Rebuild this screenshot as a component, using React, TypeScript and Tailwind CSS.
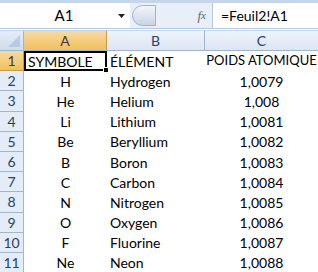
import React from 'react';

const rows: [string, string, string][] = [
    ['SYMBOLE', 'ÉLÉMENT', 'POIDS ATOMIQUE'],
    ['H', 'Hydrogen', '1,0079'],
    ['He', 'Helium', '1,008'],
    ['Li', 'Lithium', '1,0081'],
    ['Be', 'Beryllium', '1,0082'],
    ['B', 'Boron', '1,0083'],
    ['C', 'Carbon', '1,0084'],
    ['N', 'Nitrogen', '1,0085'],
    ['O', 'Oxygen', '1,0086'],
    ['F', 'Fluorine', '1,0087'],
    ['Ne', 'Neon', '1,0088'],
];

const App: React.FC = () => {
    return (
        <div className="w-[318px] h-[272px] overflow-hidden bg-white text-[14px] text-black" style={{ fontFamily: 'Lato, "Open Sans", sans-serif' }}>
            {/* formula bar */}
            <div className="h-[3px] bg-[#c5d5ea]" />
            <div className="h-[26px] flex items-stretch bg-[#e9eff8] border-b border-[#b9c9dd]">
                <div className="w-[112px] bg-white flex items-center justify-center text-[15px] pl-[16px]">A1</div>
                <div className="w-[18px] bg-white flex items-center justify-center">
                    <svg width="7" height="4" viewBox="0 0 7 4"><path d="M0 0h7L3.5 4z" fill="#222" /></svg>
                </div>
                <div className="flex-1 flex items-center relative">
                    <div className="absolute left-[2px] top-[2px] bottom-[2px] w-[24px] rounded-l-full bg-gradient-to-b from-[#f3f6fa] to-[#c9d5e4] border border-[#9fb3cc]" />
                    <div className="ml-auto w-[80px] flex items-center justify-end pr-[6px] italic text-[#55657a] text-[13px]" style={{ fontFamily: '"Liberation Serif", serif' }}>
                        f<span className="text-[11px]">x</span>
                    </div>
                </div>
                <div className="w-[106px] bg-white border-l border-[#b9c9dd] flex items-center pl-[8px] text-[14px]">=Feuil2!A1</div>
            </div>

            {/* column header row */}
            <div className="h-[21px] flex border-b border-[#9eb6ce] mt-[1px] border-t border-t-[#c5d5ea]">
                <div className="w-[24px] bg-gradient-to-b from-[#e4ecf7] to-[#cfdcee] border-r border-[#9eb6ce] relative">
                    <svg className="absolute right-[3px] bottom-[3px]" width="12" height="12" viewBox="0 0 12 12"><path d="M12 0V12H0z" fill="#b7cbe3" /></svg>
                </div>
                <div className="w-[83px] bg-gradient-to-b from-[#f9d99f] to-[#f1c05c] border-r border-[#c29d5a] flex items-center justify-center text-[#3a3a3a] text-[14px]">A</div>
                <div className="w-[98px] bg-gradient-to-b from-[#eef3fa] to-[#dce6f4] border-r border-[#9eb6ce] flex items-center justify-center text-[#27416b] text-[14px]">B</div>
                <div className="flex-1 bg-gradient-to-b from-[#eef3fa] to-[#dce6f4] flex items-center justify-center text-[#27416b] text-[14px]">C</div>
            </div>

            {/* cells */}
            {rows.map((r, i) => (
                <div key={i} className="h-[20.2px] flex whitespace-nowrap">
                    <div className={`w-[24px] shrink-0 border-r border-b flex items-center justify-center text-[14px] ${i === 0 ? 'bg-gradient-to-b from-[#f9d99f] to-[#f1c05c] border-[#c29d5a] text-[#3a3a3a]' : 'bg-[#e4ecf7] border-[#9eb6ce] text-[#27416b]'}`}>
                        {i + 1}
                    </div>
                    <div className={`w-[83px] shrink-0 flex items-center relative ${i === 0 ? 'justify-start pl-[2px] border-2 border-black' : 'justify-center'}`}>
                        {r[0]}
                        {i === 0 && <div className="absolute right-[-4px] bottom-[-4px] w-[6px] h-[6px] bg-black border border-white" />}
                    </div>
                    <div className="w-[98px] shrink-0 flex items-center pl-[3px]">{r[1]}</div>
                    <div className={`flex-1 flex items-center justify-center ${i === 0 ? 'text-[13px]' : ''}`}>{r[2]}</div>
                </div>
            ))}
        </div>
    );
};

export default App;
